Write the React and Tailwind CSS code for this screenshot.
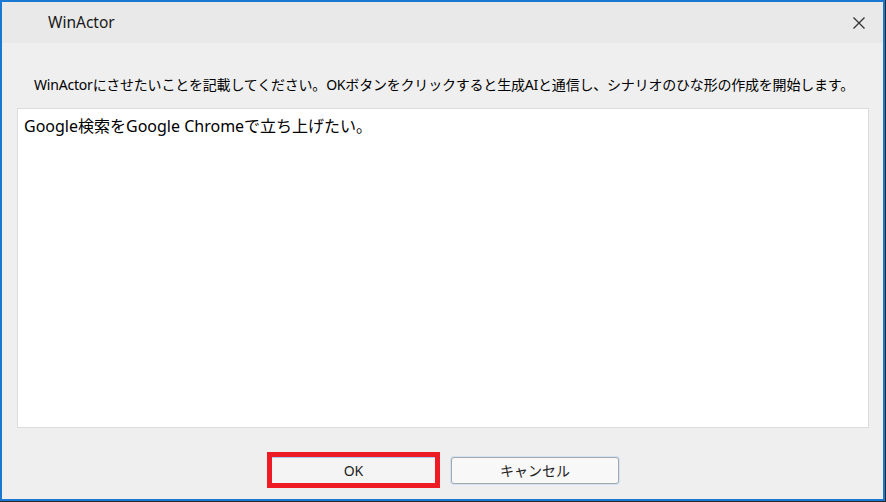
export default function App() {
  const font = { fontFamily: '"Noto Sans", "Noto Sans CJK JP", sans-serif' };
  return (
    <div className="w-[886px] h-[502px] bg-[#2a2a2a]" style={font}>
      <div className="w-[885px] h-[501px] border-2 border-[#1b78d2] bg-[#efefef] flex flex-col">
        <div className="h-[41px] bg-[#e9e9e9] flex items-center justify-between pl-[46px] pr-[14px] shrink-0">
          <span className="text-[15.5px] text-[#1a1a1a] leading-none">WinActor</span>
          <svg width="14" height="14" viewBox="0 0 14 14" className="mr-[3px]">
            <path d="M1.5 1.5 L12.5 12.5 M12.5 1.5 L1.5 12.5" stroke="#333" strokeWidth="1.3" fill="none" />
          </svg>
        </div>
        <div className="flex-1 flex flex-col pt-[33px] pl-[15px] pr-[14px]">
          <div className="pl-[17px] text-[14px] leading-[18px] text-black tracking-[-0.2px] whitespace-nowrap">
            WinActorにさせたいことを記載してください。OKボタンをクリックすると生成AIと通信し、シナリオのひな形の作成を開始します。
          </div>
          <div className="mt-[14px] h-[320px] bg-white border border-[#dcdcdc] px-[6px] pt-[7px] text-[16px] leading-[20px] text-black">
            Google検索をGoogle Chromeで立ち上げたい。
          </div>
          <div className="mt-[24px] flex justify-center items-center gap-[11px]">
            <div className="w-[173px] h-[36px] border-[5px] border-[#ed1c24]">
              <div className="w-full h-full bg-[#f4f4f4] border-t border-[#a9cdf1] flex items-center justify-center text-[14px] text-[#222]">
                OK
              </div>
            </div>
            <div className="w-[168px] h-[27px] rounded-[3px] border border-[#a8a8a8] bg-[#f8f8f8] shadow-[0_0_0_1px_#cfe2f6] flex items-center justify-center text-[14px] text-[#222]">
              キャンセル
            </div>
          </div>
        </div>
      </div>
    </div>
  );
}
